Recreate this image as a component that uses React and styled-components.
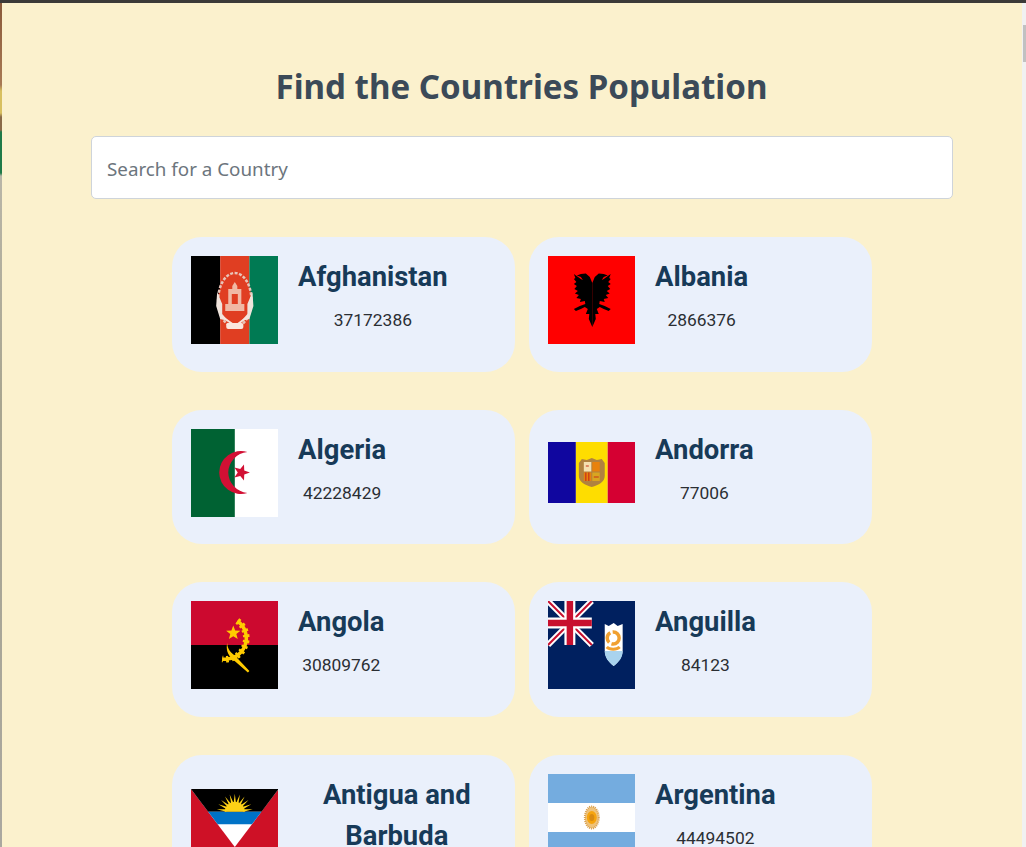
import React from "react";
import styled, { createGlobalStyle } from "styled-components";

const GlobalStyle = createGlobalStyle`
  html, body {
    margin: 0;
    height: 100%;
    overflow: hidden;
  }
  * {
    box-sizing: border-box;
  }
`;

const Janela = styled.div`
  display: flex;
  flex-direction: column;
  height: 100vh;
  overflow: hidden;
`;

const BarraTopo = styled.div`
  flex: none;
  height: 3px;
  background: #3b3a38;
`;

const Corpo = styled.div`
  flex: 1;
  display: flex;
  min-height: 0;
`;

// restos da janela de tras que aparecem na borda esquerda
const FaixaEsquerda = styled.div`
  flex: none;
  width: 2px;
  background: linear-gradient(
    to bottom,
    #8a5a3a 0,
    #a87a55 82px,
    #d8c060 88px,
    #d8c060 110px,
    #8a6a48 114px,
    #8a6a48 127px,
    #1f7a48 129px,
    #1f7a48 170px,
    #b9b6a8 173px,
    #a8a590 400px,
    #aaa8a0 847px
  );
`;

const Conteudo = styled.main`
  flex: 1;
  min-width: 0;
  padding: 63px 0 0 19px;
  background: #fbf1cd;
  overflow: hidden;
`;

const BarraRolagem = styled.div`
  flex: none;
  width: 4px;
  padding: 22px 0 0 1px;
  background: #f1f1f1;
`;

const Polegar = styled.div`
  height: 37px;
  background: #c1c1c1;
`;

const Titulo = styled.h1`
  margin: 0 0 28px;
  font-family: "Noto Sans", sans-serif;
  font-size: 33.1px;
  font-weight: 700;
  line-height: 42px;
  text-align: center;
  color: #3b4a58;
`;

const Busca = styled.input`
  display: block;
  width: 862px;
  height: 63px;
  margin: 0 auto 38px;
  padding: 2px 15px 0 15.5px;
  font-family: "Noto Sans", sans-serif;
  font-size: 18.8px;
  color: #495057;
  background: #fff;
  border: 1px solid #ced4da;
  border-radius: 5px;

  &::placeholder {
    color: #6c757d;
    opacity: 1;
  }
`;

const Grade = styled.div`
  display: grid;
  grid-template-columns: repeat(2, 343px);
  grid-auto-rows: 134.7px;
  gap: 38px 14px;
  justify-content: center;
`;

const Cartao = styled.article`
  display: flex;
  gap: 20px;
  padding: 19px;
  background: #eaf0fb;
  border-radius: 30px;
`;

const CaixaBandeira = styled.div`
  flex: none;
  display: flex;
  align-items: center;
  width: 87.6px;
  height: 88px;
`;

const Bandeira = styled.svg.attrs({ preserveAspectRatio: "none" })`
  display: block;
  width: 87.6px;
  height: ${props => props.$altura}px;
`;

const Texto = styled.div`
  width: ${props => (props.$larga ? "200px" : "auto")};
  max-width: 200px;
  padding-top: 1px;
  text-align: center;
  font-family: Roboto, sans-serif;
`;

const Nome = styled.h3`
  margin: 0 0 9px;
  font-size: 27.4px;
  font-weight: 700;
  line-height: 41px;
  color: #173a58;
`;

const Populacao = styled.p`
  margin: 0;
  font-size: 17.4px;
  line-height: 26px;
  color: #2a2e33;
`;

const pontosEstrela = (cx, cy, r, giro = -90) => {
  const pontos = [];
  for (let i = 0; i < 10; i++) {
    const raio = i % 2 === 0 ? r : r * 0.42;
    const angulo = ((giro + i * 36) * Math.PI) / 180;
    pontos.push(`${cx + raio * Math.cos(angulo)},${cy + raio * Math.sin(angulo)}`);
  }
  return pontos.join(" ");
};

const raiosSol = (cx, cy, r1, r2, qtd, inicio, fim) => {
  const partes = [];
  const passo = (fim - inicio) / qtd;
  for (let i = 0; i < qtd; i++) {
    const a0 = ((inicio + i * passo) * Math.PI) / 180;
    const a1 = ((inicio + (i + 0.5) * passo) * Math.PI) / 180;
    const a2 = ((inicio + (i + 1) * passo) * Math.PI) / 180;
    partes.push(
      `M${cx + r1 * Math.cos(a0)} ${cy + r1 * Math.sin(a0)}L${cx + r2 * Math.cos(a1)} ${cy + r2 * Math.sin(a1)}L${cx + r1 * Math.cos(a2)} ${cy + r1 * Math.sin(a2)}Z`
    );
  }
  return partes.join("");
};

const Afeganistao = () => (
  <Bandeira $altura={88} viewBox="0 0 87 88">
    <rect width="29" height="88" fill="#000" />
    <rect x="29" width="29" height="88" fill="#e03e22" />
    <rect x="58" width="29" height="88" fill="#007a53" />
    <ellipse cx="43.5" cy="44" rx="16.5" ry="27" fill="#e03e22" stroke="#e8c4b8" strokeWidth="2.5" strokeDasharray="3 1.5" />
    <path d="M43.5 26l2.5 4v3h4v15h3v7H34v-7h3V33h4v-3z" fill="#f0b8a4" />
    <path d="M40.5 38h6v10h-6z" fill="#e03e22" />
    <path d="M26 36l5 12 0 10 6 7-8-2-4-13zM61 36l-5 12 0 10-6 7 8-2 4-13z" fill="#efe4dc" />
    <path d="M30 60l14 10 13-10" fill="none" stroke="#f7e4dc" strokeWidth="2" />
    <rect x="35" y="67" width="17" height="6" rx="2" fill="#fbe6de" />
  </Bandeira>
);

const Albania = () => {
  const metade =
    "M44.5 27L42 21L38 17.5L33 18L29 19.5L33 21L35 24L33 23L26 18L27.5 22L26 23L28.5 26L26 28L29 30L26.5 33L30 35L27 37.5L31 39L28.5 42L33 43L32 46L37 45L37.5 48L32 50L26 53L28 55L33 53L37 51L40 53L38 58L41.5 58L41 63L44.5 71Z";
  return (
    <Bandeira $altura={88} viewBox="0 0 88 88">
      <rect width="88" height="88" fill="#f00" />
      <path d={metade} fill="#000" />
      <path d={metade} fill="#000" transform="translate(89 0) scale(-1 1)" />
    </Bandeira>
  );
};

const Argelia = () => (
  <Bandeira $altura={88} viewBox="0 0 87 88">
    <rect width="87" height="88" fill="#fff" />
    <rect width="43.5" height="88" fill="#006233" />
    <path d="M56 23A21.5 21.5 0 1 0 56 64A21 21 0 0 1 37 43.500A21 21 0 0 1 56 23Z" fill="#d21034" />
    <polygon points={pontosEstrela(50, 43.5, 8.5, 0)} fill="#d21034" />
  </Bandeira>
);

const Andorra = () => (
  <Bandeira $altura={61} viewBox="0 0 88 61">
    <rect width="28" height="61" fill="#10069f" />
    <rect x="28" width="32" height="61" fill="#fedd00" />
    <rect x="60" width="28" height="61" fill="#d50032" />
    <path d="M34 17l5 1 5-2 5 2 5-1 3 4v13c0 6-6 9-13 11-7-2-13-5-13-11V21z" fill="#b0823f" />
    <rect x="36" y="20" width="7.5" height="9.5" fill="#f5e0b0" />
    <rect x="44.5" y="20" width="7.5" height="9.5" fill="#e8820c" />
    <rect x="36" y="30.5" width="7.5" height="8.5" fill="#e8820c" />
    <rect x="44.5" y="30.5" width="7.5" height="8.5" fill="#d9a520" />
    <path d="M38 30.5v8.500M41 30.500v8.500M46 35h5M38 24h3" stroke="#c8321a" strokeWidth="1.2" />
  </Bandeira>
);

const Angola = () => (
  <Bandeira $altura={88} viewBox="0 0 87 88">
    <rect width="87" height="44" fill="#cc092f" />
    <rect y="44" width="87" height="44" fill="#000" />
    <path d="M46 20A21 21 0 0 1 31 58" fill="none" stroke="#ffcb00" strokeWidth="3.5" />
    <path d="M46 20A21 21 0 0 1 31 58" fill="none" stroke="#ffcb00" strokeWidth="6.5" strokeDasharray="2.5 3" />
    <polygon points={pontosEstrela(42, 32, 7.5)} fill="#ffcb00" />
    <path d="M36 42c0 6 4 10 8 13l14 15-1.500 1.500-16-14c-4-4-6-9-4.500-15.500z" fill="#ffcb00" />
  </Bandeira>
);

const Anguilla = () => (
  <Bandeira $altura={88} viewBox="0 0 88 88">
    <rect width="88" height="88" fill="#00205f" />
    <path d="M0 0L44 44M44 0L0 44" stroke="#fff" strokeWidth="6" />
    <path d="M0 0L44 44M44 0L0 44" stroke="#c8102e" strokeWidth="2" />
    <path d="M22 0V44M0 22H44" stroke="#fff" strokeWidth="11" />
    <path d="M22 0V44M0 22H44" stroke="#c8102e" strokeWidth="6.5" />
    <path d="M57 23l4 2 5-3 4 3 5-2v26c0 7-4 12-9 16-5-4-9-9-9-16z" fill="#fff" />
    <path d="M57 50h18c0 7-4 11-9 15-5-4-9-8-9-15z" fill="#a9d3ee" />
    <circle cx="65.500" cy="37" r="6" fill="none" stroke="#f0a030" strokeWidth="3.5" strokeDasharray="11 2.500" />
    <path d="M59 46c3 3 10 3 13 0" fill="none" stroke="#f0a030" strokeWidth="3" />
  </Bandeira>
);

const Antigua = () => (
  <Bandeira $altura={58} viewBox="0 0 87 58">
    <rect width="87" height="58" fill="#ce1126" />
    <path d="M0 0H87L43.5 58Z" fill="#fff" />
    <path d="M0 0H87L70 22.7H17Z" fill="#000" />
    <path d="M17 22.7H70L60.5 35.3H26.5Z" fill="#0072c6" />
    <path d={raiosSol(43.5, 22.7, 8.5, 18, 11, 180, 360)} fill="#fcd116" />
    <path d="M33.500 22.700a10 10 0 0 1 20 0Z" fill="#fcd116" />
  </Bandeira>
);

const Argentina = () => (
  <Bandeira $altura={88} viewBox="0 0 88 88">
    <rect width="88" height="88" fill="#74acdf" />
    <rect y="29" width="88" height="29" fill="#fff" />
    <ellipse cx="44" cy="43.5" rx="7" ry="11" fill="#eec27a" stroke="#d9a050" strokeWidth="2" strokeDasharray="1 1" />
    <ellipse cx="44" cy="43.5" rx="5" ry="6.5" fill="#f6a40e" />
    <ellipse cx="44" cy="43.5" rx="2.500" ry="3.500" fill="#d98a10" />
  </Bandeira>
);

const paises = [
  { nome: "Afghanistan", populacao: 37172386, Flag: Afeganistao },
  { nome: "Albania", populacao: 2866376, Flag: Albania },
  { nome: "Algeria", populacao: 42228429, Flag: Argelia },
  { nome: "Andorra", populacao: 77006, Flag: Andorra },
  { nome: "Angola", populacao: 30809762, Flag: Angola },
  { nome: "Anguilla", populacao: 84123, Flag: Anguilla },
  { nome: "Antigua and Barbuda", populacao: 96286, Flag: Antigua, larga: true },
  { nome: "Argentina", populacao: 44494502, Flag: Argentina },
];

export default function App() {
  return (
    <Janela>
      <GlobalStyle />
      <BarraTopo />
      <Corpo>
        <FaixaEsquerda />
        <Conteudo>
          <Titulo>Find the Countries Population</Titulo>
          <Busca type="text" placeholder="Search for a Country" />
          <Grade>
            {paises.map(({ nome, populacao, Flag, larga }) => (
              <Cartao key={nome}>
                <CaixaBandeira>
                  <Flag />
                </CaixaBandeira>
                <Texto $larga={larga}>
                  <Nome>{nome}</Nome>
                  <Populacao>{populacao}</Populacao>
                </Texto>
              </Cartao>
            ))}
          </Grade>
        </Conteudo>
        <BarraRolagem>
          <Polegar />
        </BarraRolagem>
      </Corpo>
    </Janela>
  );
}
